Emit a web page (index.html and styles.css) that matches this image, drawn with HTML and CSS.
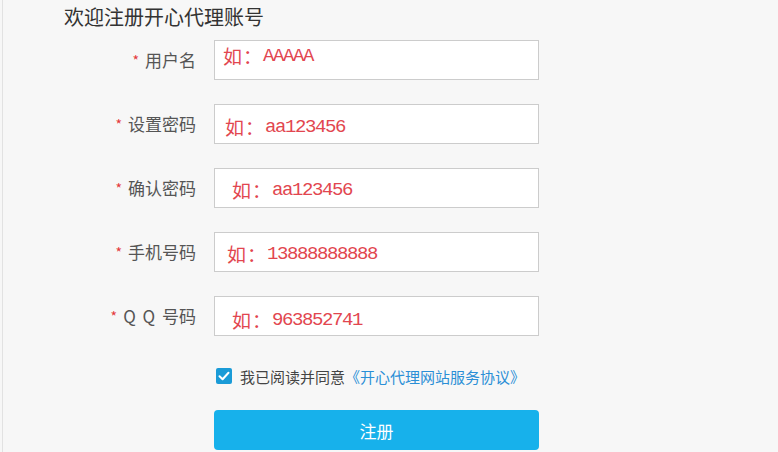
FILE: index.html
```html
<!DOCTYPE html>
<html lang="zh-CN">
<head>
<meta charset="utf-8">
<title>欢迎注册开心代理账号</title>
<link rel="stylesheet" href="styles.css">
</head>
<body>
<div class="page">
  <h1 class="title">欢迎注册开心代理账号</h1>
  <form class="form">
    <div class="row">
      <label class="label"><span class="req">*</span>用户名</label>
      <div class="field f-user"><span class="ex-pre">如：</span><span class="ex-val">AAAAA</span></div>
    </div>
    <div class="row">
      <label class="label"><span class="req">*</span>设置密码</label>
      <div class="field f-pwd"><span class="ex-pre">如：</span><span class="ex-val">aa123456</span></div>
    </div>
    <div class="row">
      <label class="label"><span class="req">*</span>确认密码</label>
      <div class="field f-confirm"><span class="ex-pre">如：</span><span class="ex-val">aa123456</span></div>
    </div>
    <div class="row">
      <label class="label"><span class="req">*</span>手机号码</label>
      <div class="field f-phone"><span class="ex-pre">如：</span><span class="ex-val">13888888888</span></div>
    </div>
    <div class="row">
      <label class="label label-qq"><span class="req">*</span>Q Q 号码</label>
      <div class="field f-qq"><span class="ex-pre">如：</span><span class="ex-val">963852741</span></div>
    </div>
    <div class="agree">
      <span class="check">
        <svg viewBox="0 0 16 16" width="16" height="16"><path d="M3.5 8.2 L6.6 11.2 L12.5 4.8" fill="none" stroke="#fff" stroke-width="2" stroke-linecap="round" stroke-linejoin="round"/></svg>
      </span>
      <span class="agree-text">我已阅读并同意</span><a class="agree-link" href="#">《开心代理网站服务协议》</a>
    </div>
    <div class="actions">
      <button type="button" class="btn">注册</button>
    </div>
  </form>
</div>
</body>
</html>
```

FILE: styles.css
```css
html, body {
  margin: 0;
  padding: 0;
  height: 100%;
}
body {
  background: #f7f7f7;
  font-family: "Noto Sans CJK SC", "Noto Sans", sans-serif;
  color: #333;
}
.page {
  margin-left: 2px;
  border-left: 1px solid #e2e2e2;
  min-height: 100%;
  box-sizing: border-box;
}
.title {
  margin: 0;
  padding-left: 61px;
  font-size: 20px;
  font-weight: normal;
  line-height: 33px;
  color: #333;
}
.form {
  margin-top: 7px;
}
.row {
  display: flex;
  align-items: center;
  height: 40px;
  margin-bottom: 24px;
}
.label {
  width: 193px;
  margin-right: 18px;
  text-align: right;
  font-size: 17px;
  color: #555;
  line-height: 24px;
}
.label-qq {
  word-spacing: 3px;
}
.req {
  color: #e4393c;
  font-size: 14px;
  margin-right: 6px;
  position: relative;
  top: -1px;
}
.field {
  width: 325px;
  height: 40px;
  box-sizing: border-box;
  border: 1px solid #cccccc;
  background: #fff;
  color: #e2464f;
  display: flex;
  align-items: center;
  padding-left: 8px;
}
.ex-pre {
  font-family: "Noto Sans CJK SC", sans-serif;
  font-size: 19px;
  width: 40px;
  letter-spacing: 1px;
  line-height: 24px;
}
.ex-val {
  font-family: "Liberation Mono", monospace;
  font-size: 19px;
  letter-spacing: -1.4px;
  line-height: 24px;
}
.f-user { padding-left: 8px; padding-bottom: 8px; }
.f-pwd { padding-left: 10px; padding-top: 6px; }
.f-confirm { padding-left: 17px; padding-top: 4px; }
.f-phone { padding-left: 12px; padding-top: 4px; }
.f-qq { padding-left: 17px; padding-top: 8px; }
.agree {
  display: flex;
  align-items: center;
  height: 24px;
  margin-top: 28px;
  padding-left: 213px;
  font-size: 15px;
}
.check {
  width: 16px;
  height: 16px;
  border-radius: 2px;
  background: #1a9bd7;
  display: inline-flex;
  margin-right: 8px;
}
.agree-text {
  color: #444;
}
.agree-link {
  color: #2b8fd6;
  text-decoration: none;
}
.actions {
  margin-top: 22px;
  padding-left: 211px;
}
.btn {
  width: 325px;
  height: 40px;
  border: none;
  border-radius: 4px;
  background: #17b1eb;
  color: #fff;
  font-family: "Noto Sans CJK SC", sans-serif;
  font-size: 17px;
  padding: 0;
}
```
